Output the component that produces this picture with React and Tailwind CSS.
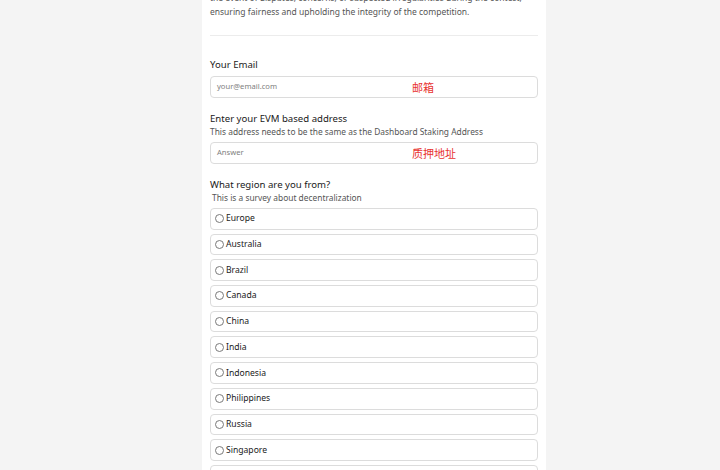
import React from "react";

const regions = [
  "Europe",
  "Australia",
  "Brazil",
  "Canada",
  "China",
  "India",
  "Indonesia",
  "Philippines",
  "Russia",
  "Singapore",
  "Taiwan",
];

function TextBox({ placeholder, note }) {
  return (
    <div className="mt-[4px] h-[22px] rounded-[4px] border border-[#dcdcdc] bg-white flex items-center pl-[6px]">
      <span className="w-[195px] shrink-0 text-[7.6px] text-[#808080]">{placeholder}</span>
      <span className="mt-[3px] text-[11px] text-[#e8322f]">{note}</span>
    </div>
  );
}

function Option({ label }) {
  return (
    <div className="h-[21.7px] shrink-0 rounded-[4px] border border-[#dcdcdc] bg-white flex items-center pl-[4px]">
      <span className="w-[9px] h-[9px] rounded-full border border-[#7a7a7a]" />
      <span className="ml-[2px] text-[8.6px] text-[#1a1a1a]">{label}</span>
    </div>
  );
}

export default function App() {
  return (
    <div
      className="h-[470px] w-[720px] overflow-hidden bg-[#f4f4f4]"
      style={{ fontFamily: '"Noto Sans", "Noto Sans CJK SC", sans-serif' }}
    >
      <div className="ml-[202px] w-[344px] min-h-[480px] bg-white px-[8px]">
        <p className="mt-[-9px] whitespace-nowrap text-[8.5px] leading-[14px] text-[#555]">
          the event of disputes, concerns, or suspected irregularities during the contest,
          <br />
          ensuring fairness and upholding the integrity of the competition.
        </p>
        <div className="mt-[16px] h-px bg-[#ececec]" />

        <div className="mt-[22px] text-[9.6px] leading-[14px] text-[#1a1a1a]">Your Email</div>
        <TextBox placeholder="your@email.com" note="邮箱" />

        <div className="mt-[14px] text-[9.6px] leading-[14px] text-[#1a1a1a]">
          Enter your EVM based address
        </div>
        <div className="text-[8.4px] leading-[12px] text-[#555]">
          This address needs to be the same as the Dashboard Staking Address
        </div>
        <TextBox placeholder="Answer" note="质押地址" />

        <div className="mt-[14px] text-[9.6px] leading-[14px] text-[#1a1a1a]">
          What region are you from?
        </div>
        <div className="pl-[2px] text-[8.4px] leading-[12px] text-[#555]">
          This is a survey about decentralization
        </div>
        <div className="mt-[4px] flex flex-col gap-[4px]">
          {regions.map((r) => (
            <Option key={r} label={r} />
          ))}
        </div>
      </div>
    </div>
  );
}
